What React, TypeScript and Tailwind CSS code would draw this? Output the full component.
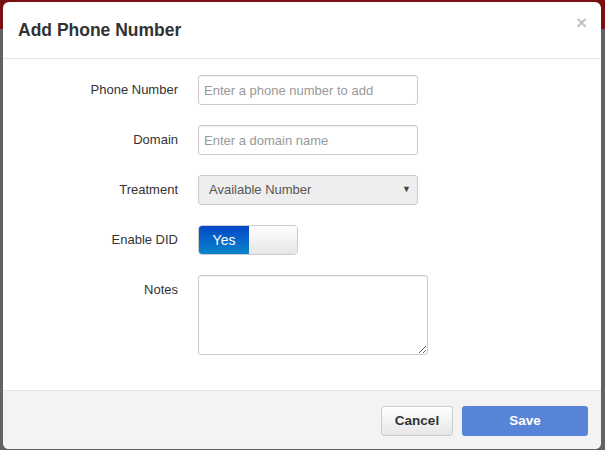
import { useState } from 'react'

const inputClass =
  'h-[30px] w-[220px] rounded-[3px] border border-[#cccccc] bg-white px-[5px] text-[13px] text-[#555] placeholder:text-[#999] shadow-[inset_0_1px_1px_rgba(0,0,0,0.075)] outline-none'

function Label({ children }: { children: string }) {
  return <label className="pt-[6px] text-right text-[13px] leading-[18px] text-[#333]">{children}</label>
}

export default function App() {
  const [enabled, setEnabled] = useState(true)

  return (
    <div className="h-[450px] w-[605px] overflow-hidden bg-[linear-gradient(#7a0f12_0_29px,#626262_29px)] pl-[3px] pr-[4px] pt-[2px] font-['Liberation_Sans',Arial,sans-serif]">
      <div className="flex h-[447px] flex-col overflow-hidden rounded-[6px] bg-white">
        <div className="flex h-[57px] items-center justify-between border-b border-[#e5e5e5] pl-[15px] pr-[14px]">
          <h4 className="pt-[1px] text-[17.5px] font-bold text-[#333]">Add Phone Number</h4>
          <button className="-mt-[16px] text-[19px] font-bold leading-none text-[#c4c4c4]">×</button>
        </div>

        <div className="grid h-[331px] grid-cols-[175px_1fr] content-start gap-x-5 gap-y-5 pt-4">
          <Label>Phone Number</Label>
          <input className={inputClass} placeholder="Enter a phone number to add" />

          <Label>Domain</Label>
          <input className={inputClass} placeholder="Enter a domain name" />

          <Label>Treatment</Label>
          <div className="flex h-[30px] w-[220px] items-center justify-between rounded-[3px] border border-[#cccccc] bg-[#eeeeee] pl-[10px] pr-[6px] text-[13px] text-[#555]">
            <span>Available Number</span>
            <span className="text-[9px] text-[#444]">▼</span>
          </div>

          <Label>Enable DID</Label>
          <button
            onClick={() => setEnabled(!enabled)}
            className="flex h-[30px] w-[100px] overflow-hidden rounded-[4px] border border-[#cccccc]"
          >
            <span className="flex h-full w-[50px] items-center justify-center bg-[linear-gradient(#0447c9,#0a86c9)] text-[14px] text-white">
              {enabled ? 'Yes' : ''}
            </span>
            <span className="h-full flex-1 bg-[linear-gradient(#ffffff,#e6e6e6)]" />
          </button>

          <Label>Notes</Label>
          <textarea className="h-[80px] w-[230px] rounded-[3px] border border-[#cccccc] p-[5px] text-[13px] shadow-[inset_0_1px_1px_rgba(0,0,0,0.075)] outline-none" />
        </div>

        <div className="flex flex-1 justify-end gap-[9px] border-t border-[#e5e5e5] bg-[#f3f3f3] pr-[13px] pt-[15px]">
          <button className="h-[30px] w-[72px] rounded-[3px] border border-[#cccccc] bg-[linear-gradient(#ffffff,#e6e6e6)] text-[13.5px] font-bold text-[#333]">
            Cancel
          </button>
          <button className="h-[30px] w-[126px] rounded-[3px] bg-[#5884d8] text-[13.5px] font-bold text-white">
            Save
          </button>
        </div>
      </div>
    </div>
  )
}
